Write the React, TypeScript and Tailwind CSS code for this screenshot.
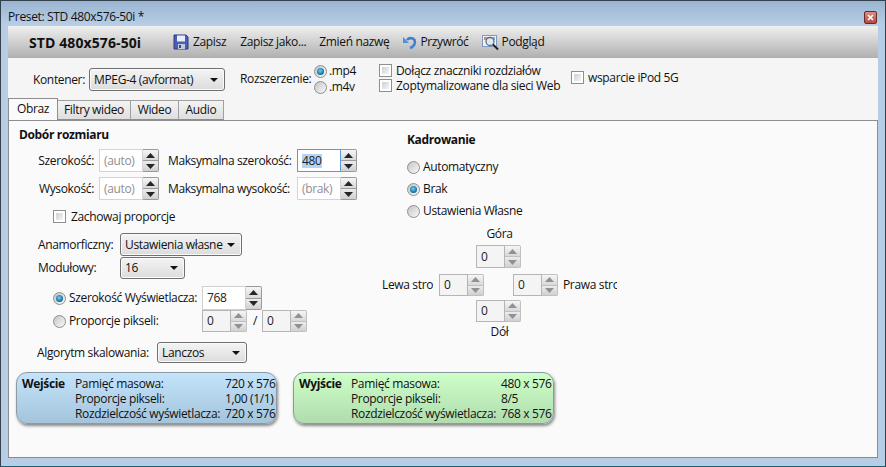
import React from "react";

function Tri({ down, dim }: { down?: boolean; dim?: boolean }) {
  return (
    <svg width="9" height="5" viewBox="0 0 9 5" className="block">
      <path d={down ? "M0 0H9L4.5 5Z" : "M0 5H9L4.5 0Z"} fill={dim ? "#8d9298" : "#23262a"} />
    </svg>
  );
}

function Spin({ w, h, value, dim, focus, grey }: { w: number; h: number; value: string; dim?: boolean; focus?: boolean; grey?: boolean }) {
  return (
    <div className="flex shrink-0" style={{ height: h }}>
      <div
        className={`flex items-center border pl-[4px] text-[12px] ${focus ? "border-[#5b9bd5]" : dim ? "border-[#d4d4d4]" : grey ? "border-[#b5b5b5]" : "border-[#d0d0d0]"} ${grey ? "bg-[#f4f4f4]" : "bg-white"} ${dim ? "text-[#8f8f8f] bg-[#fafafa]" : "text-[#222]"}`}
        style={{ width: w }}
      >
        {focus ? <span className="bg-[#b3d4f5] px-0 leading-[14px]">{value}</span> : value}
      </div>
      <div className="flex w-[16px] flex-col">
        <div className={`flex flex-1 items-center justify-center rounded-tr-[2px] border border-l-0 ${grey ? "border-[#c0c0c0]" : "border-[#9a9a9a]"} bg-gradient-to-b from-[#f6f6f6] to-[#d8d8d8]`}>
          <Tri dim={grey} />
        </div>
        <div className={`flex flex-1 items-center justify-center rounded-br-[2px] border border-t-0 border-l-0 ${grey ? "border-[#c0c0c0]" : "border-[#9a9a9a]"} bg-gradient-to-b from-[#ececec] to-[#d0d0d0]`}>
          <Tri down dim={grey} />
        </div>
      </div>
    </div>
  );
}

function Check() {
  return (
    <span className="block h-[13px] w-[13px] shrink-0 border border-[#8e8f8f] bg-white p-[2px]">
      <span className="block h-full w-full bg-gradient-to-br from-[#cfd1d5] to-[#f4f4f6]" />
    </span>
  );
}

function Radio({ on }: { on?: boolean }) {
  return (
    <span className="flex h-[13px] w-[13px] shrink-0 items-center justify-center rounded-full border border-[#8e8f8f] bg-gradient-to-br from-[#c4c4c4] to-[#fafafa]">
      {on ? (
        <span className="block h-[7px] w-[7px] rounded-full bg-[radial-gradient(circle_at_45%_40%,#6fd2ee,#15709f_65%,#0c4f80)]" />
      ) : (
        <span className="block h-[7px] w-[7px] rounded-full bg-gradient-to-br from-[#cfcfcf] to-[#efefef]" />
      )}
    </span>
  );
}

function Select({ w, h, value }: { w: number; h: number; value: string }) {
  return (
    <div
      className="flex shrink-0 items-center justify-between rounded-[3px] border border-[#707070] bg-gradient-to-b from-[#f4f4f4] to-[#dcdcdc] pl-[4px] pr-[6px] text-[12px] text-[#111] shadow-[inset_0_0_0_1px_#fafafa]"
      style={{ width: w, height: h }}
    >
      <span>{value}</span>
      <svg width="8" height="4" viewBox="0 0 8 4"><path d="M0 0H8L4 4Z" fill="#111" /></svg>
    </div>
  );
}

function Stats({ title, rows, color, tw }: { title: string; rows: [string, string][]; color: string; tw: number }) {
  return (
    <div className={`flex h-[52px] w-[261px] rounded-[11px] border border-[#8d9aa3] pl-[5px] pt-[3px] text-[12px] leading-[15px] text-[#111] shadow-[1px_2px_3px_rgba(0,0,0,0.45)] ${color}`}>
      <div className="font-bold" style={{ width: tw }}>{title}</div>
      <div className="flex flex-col">
        {rows.map(([a, b]) => (
          <div key={a} className="flex whitespace-nowrap">
            <span className="w-[150px]">{a}</span>
            <span>{b}</span>
          </div>
        ))}
      </div>
    </div>
  );
}

function Floppy() {
  return (
    <svg width="16" height="16" viewBox="0 0 16 16">
      <path d="M1 1H13L15 3V15H1Z" fill="#4a5fb8" stroke="#2c3a80" />
      <rect x="4" y="1.5" width="8" height="6" fill="#e8eefa" />
      <rect x="5" y="10" width="7" height="5" fill="#c4cbd8" />
      <rect x="6" y="11" width="2" height="3" fill="#39478f" />
    </svg>
  );
}

function Undo() {
  return (
    <svg width="16" height="16" viewBox="0 0 16 16">
      <path d="M5 6C7 3.5 11 3.5 12.5 6C14 9 12 12.5 8 14" fill="none" stroke="#3f7fd0" strokeWidth="2.6" />
      <path d="M1 3V9H7Z" fill="#4f8fe0" />
    </svg>
  );
}

function Preview() {
  return (
    <svg width="17" height="17" viewBox="0 0 17 17">
      <rect x="0.5" y="1.5" width="14" height="11" fill="#eef3fa" stroke="#7f9ac0" />
      <rect x="2" y="3" width="4" height="3" fill="#d98a5a" />
      <rect x="10" y="3" width="3" height="3" fill="#7fb0e0" />
      <circle cx="8" cy="7.5" r="4" fill="#dfeaf5" stroke="#5f6f80" strokeWidth="1.3" />
      <path d="M11 10.5L16 15.5" stroke="#222" strokeWidth="2" />
    </svg>
  );
}

function TB({ icon, label, cls }: { icon?: React.ReactNode; label: string; cls: string }) {
  return (
    <div className={`flex items-center ${cls}`}>
      {icon}
      <span>{label}</span>
    </div>
  );
}

export default function App() {
  return (
    <div className="flex h-[467px] w-[886px] flex-col overflow-hidden border border-[#33414c] border-b-[#1f5f72] bg-[#b7cde6] font-['Open_Sans',sans-serif] text-[12px] tracking-[-0.35px] text-[#111]">
      <div className="flex h-[25px] shrink-0 items-center justify-between bg-gradient-to-b from-[#9ab4d0] to-[#b9cfe8] pl-[7px] pr-[8px] pt-[7px]">
        <span className="text-[#111]">Preset: STD 480x576-50i *</span>
        <span className="flex h-[13px] w-[13px] items-center justify-center rounded-[2px] border border-[#6a2a28] bg-gradient-to-b from-[#dc8e86] to-[#b4483f]">
          <svg width="7" height="7" viewBox="0 0 7 7"><path d="M1 1L6 6M6 1L1 6" stroke="#fff" strokeWidth="1.6" /></svg>
        </span>
      </div>
      <div className="mx-[7px] mb-[8px] flex min-h-0 flex-1 flex-col border-b border-[#8a8a8a] bg-[#f5f5f5]">
        <div className="flex h-[32px] shrink-0 items-center bg-gradient-to-b from-[#f0f0f0] to-[#b0b0b0] text-[12px]">
          <span className="ml-[21px] w-[144px] text-[14px] font-bold tracking-[0.1px]">STD 480x576-50i</span>
          <TB icon={<Floppy />} label="Zapisz" cls="gap-[4px]" />
          <TB label="Zapisz jako..." cls="ml-[14px]" />
          <TB label="Zmień nazwę" cls="ml-[13px]" />
          <TB icon={<Undo />} label="Przywróć" cls="ml-[13px] gap-[2px]" />
          <TB icon={<Preview />} label="Podgląd" cls="ml-[13px] gap-[3px]" />
        </div>
        <div className="flex h-[41px] shrink-0 items-start">
          <div className="ml-[25px] mt-[10px] flex items-center">
            <span className="w-[56px]">Kontener:</span>
            <Select w={136} h={23} value="MPEG-4 (avformat)" />
          </div>
          <span className="ml-[15px] mt-[12px] w-[74px]">Rozszerzenie:</span>
          <div className="mt-[6px] flex w-[65px] flex-col gap-[2px]">
            <label className="flex h-[14px] items-center gap-[2px]"><Radio on />.mp4</label>
            <label className="flex h-[14px] items-center gap-[2px]"><Radio />.m4v</label>
          </div>
          <div className="mt-[5px] flex w-[192px] flex-col">
            <label className="flex h-[15px] items-center gap-[4px]"><Check />Dołącz znaczniki rozdziałów</label>
            <label className="flex h-[15px] items-center gap-[4px]"><Check />Zoptymalizowane dla sieci Web</label>
          </div>
          <label className="mt-[12px] flex h-[15px] items-center gap-[4px]"><Check />wsparcie iPod 5G</label>
        </div>
        <div className="relative z-10 flex h-[21px] shrink-0 items-end">
          <div className="flex h-[22px] w-[50px] items-center justify-center border border-b-0 border-[#8e8e8e] bg-[#fafafa] pb-[2px]">Obraz</div>
          <div className="flex h-[20px] w-[73px] items-center justify-center border border-b-[#8e8e8e] border-l-0 border-[#a0a0a0] bg-gradient-to-b from-[#f4f4f4] to-[#dedede]">Filtry wideo</div>
          <div className="flex h-[20px] w-[48px] items-center justify-center border border-b-[#8e8e8e] border-l-0 border-[#a0a0a0] bg-gradient-to-b from-[#f4f4f4] to-[#dedede]">Wideo</div>
          <div className="flex h-[20px] w-[45px] items-center justify-center border border-b-[#8e8e8e] border-l-0 border-[#a0a0a0] bg-gradient-to-b from-[#f4f4f4] to-[#dedede]">Audio</div>
        </div>
        <div className="flex min-h-0 flex-1 flex-col border border-[#8e8e8e] border-b-0 bg-[#fafafa]">
          <div className="flex h-[251px] shrink-0">
            <div className="ml-[10px] w-[388px] shrink-0">
              <div className="mt-[6px] h-[16px] font-bold leading-[16px]">Dobór rozmiaru</div>
              <div className="mt-[6px] flex items-center">
                <span className="w-[75px] text-right">Szerokość:</span>
                <div className="ml-[5px]"><Spin w={44} h={23} value="(auto)" dim /></div>
                <span className="ml-[9px] w-[129px] tracking-[-0.4px]">Maksymalna szerokość:</span>
                <Spin w={44} h={23} value="480" focus />
              </div>
              <div className="mt-[5px] flex items-center">
                <span className="w-[75px] text-right">Wysokość:</span>
                <div className="ml-[5px]"><Spin w={44} h={23} value="(auto)" dim /></div>
                <span className="ml-[9px] w-[129px] tracking-[-0.4px]">Maksymalna wysokość:</span>
                <Spin w={44} h={23} value="(brak)" dim />
              </div>
              <label className="ml-[34px] mt-[10px] flex h-[13px] items-center gap-[5px]"><Check />Zachowaj proporcje</label>
              <div className="mt-[10px] flex items-center">
                <span className="ml-[19px] w-[82px]">Anamorficzny:</span>
                <Select w={122} h={23} value="Ustawienia własne" />
              </div>
              <div className="mt-px flex items-center">
                <span className="ml-[19px] w-[82px]">Modułowy:</span>
                <Select w={65} h={22} value="16" />
              </div>
              <div className="mt-[7px] flex h-[24px] items-center">
                <span className="ml-[34px] w-[149px]"><label className="flex items-center gap-[3px]"><Radio on />Szerokość Wyświetlacza:</label></span>
                <Spin w={44} h={24} value="768" />
              </div>
              <div className="flex h-[22px] items-center">
                <span className="ml-[34px] w-[149px]"><label className="flex items-center gap-[3px]"><Radio />Proporcje pikseli:</label></span>
                <Spin w={29} h={22} value="0" grey />
                <span className="ml-[6px] w-[9px]">/</span>
                <Spin w={29} h={22} value="0" grey />
              </div>
              <div className="mt-[10px] flex items-center">
                <span className="ml-[18px] w-[120px]">Algorytm skalowania:</span>
                <Select w={90} h={21} value="Lanczos" />
              </div>
            </div>
            <div className="w-[240px] shrink-0">
              <div className="mt-[11px] h-[16px] font-bold leading-[16px]">Kadrowanie</div>
              <div className="mt-[12px] flex flex-col gap-[8px]">
                <label className="flex h-[14px] items-center gap-[3px]"><Radio />Automatyczny</label>
                <label className="flex h-[14px] items-center gap-[3px]"><Radio on />Brak</label>
                <label className="flex h-[14px] items-center gap-[3px]"><Radio />Ustawienia Własne</label>
              </div>
              <div className="mt-[7px] flex flex-col items-start">
                <div className="ml-[70px] w-[45px] text-center">Góra</div>
                <div className="ml-[69px] mt-[2px]"><Spin w={29} h={23} value="0" grey /></div>
                <div className="mt-[6px] flex items-center">
                  <span className="-ml-[25px] w-[51px] overflow-hidden whitespace-nowrap">Lewa strona</span>
                  <div className="ml-[6px]"><Spin w={29} h={22} value="0" grey /></div>
                  <div className="ml-[29px]"><Spin w={29} h={22} value="0" grey /></div>
                  <span className="ml-[5px] w-[54px] overflow-hidden whitespace-nowrap">Prawa strona</span>
                </div>
                <div className="ml-[69px] mt-[4px]"><Spin w={29} h={22} value="0" grey /></div>
                <div className="ml-[70px] mt-px w-[45px] text-center">Dół</div>
              </div>
            </div>
          </div>
          <div className="flex gap-[16px] pl-[7px]">
            <Stats title="Wejście" tw={53} color="bg-gradient-to-b from-[#c4e4fb] to-[#a4c4dc]" rows={[["Pamięć masowa:", "720 x 576"], ["Proporcje pikseli:", "1,00 (1/1)"], ["Rozdzielczość wyświetlacza:", "720 x 576"]]} />
            <Stats title="Wyjście" tw={52} color="bg-gradient-to-b from-[#ceffc8] to-[#b0dcae]" rows={[["Pamięć masowa:", "480 x 576"], ["Proporcje pikseli:", "8/5"], ["Rozdzielczość wyświetlacza:", "768 x 576"]]} />
          </div>
        </div>
      </div>
    </div>
  );
}
